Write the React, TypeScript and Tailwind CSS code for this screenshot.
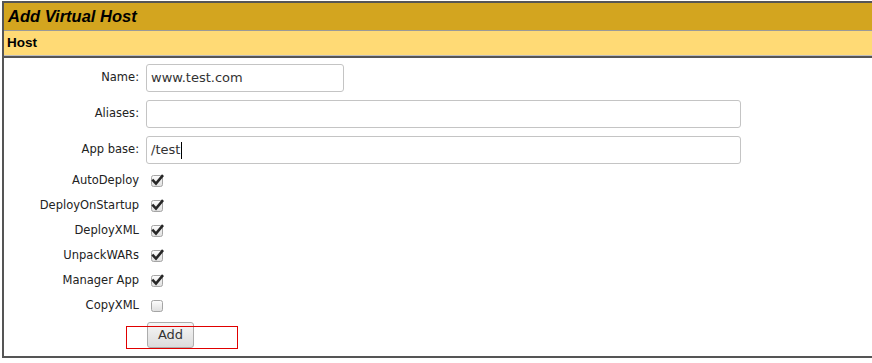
import React from "react";

const font = { fontFamily: '"DejaVu Sans", Verdana, sans-serif' };

function Check({ checked }: { checked: boolean }) {
  return (
    <svg width="14" height="14" viewBox="0 0 14 14" className="block">
      <defs>
        <linearGradient id="cbg" x1="0" y1="0" x2="0" y2="1">
          <stop offset="0" stopColor="#fdfdfd" />
          <stop offset="1" stopColor="#dedede" />
        </linearGradient>
      </defs>
      <rect x="1.5" y="1.5" width="11" height="11" rx="2" fill="url(#cbg)" stroke="#a5a5a5" />
      {checked && (
        <path d="M3.2 6.6 L6 9.6 L12.2 2.2" fill="none" stroke="#262626" strokeWidth="2.6" strokeLinecap="square" strokeLinejoin="miter" />
      )}
    </svg>
  );
}

function Field({ label, value, wide, caret }: { label: string; value: string; wide?: boolean; caret?: boolean }) {
  return (
    <div className="flex h-[36px] items-center">
      <div className="w-[135px] text-right text-[11.5px] text-[#222]">{label}:</div>
      <div
        className={`ml-[7px] flex h-[28px] items-center rounded-[3px] border border-[#c4c4c4] bg-white pl-[4px] text-[13px] text-[#333] ${wide ? "w-[595px]" : "w-[198px]"}`}
      >
        {value}
        {caret && <span className="ml-[1px] inline-block h-[17px] w-px bg-black" />}
      </div>
    </div>
  );
}

function CheckRow({ label, checked }: { label: string; checked: boolean }) {
  return (
    <div className="flex h-[25px] items-center">
      <div className="w-[135px] text-right text-[11.5px] text-[#222]">{label}</div>
      <div className="ml-[11px]">
        <Check checked={checked} />
      </div>
    </div>
  );
}

export default function App() {
  return (
    <div className="h-[363px] w-[872px] overflow-hidden bg-white pt-px" style={font}>
      <div className="ml-[2px] border-l-2 border-t-2 border-b-2 border-[#555]">
        <div
          className="flex h-[28px] items-center border-b border-[#9a9a9a] bg-[#d3a51f] pl-[4px] text-[16.5px] font-bold italic text-black"
          style={{ fontFamily: '"Liberation Sans", Arial, sans-serif' }}
        >
          Add Virtual Host
        </div>
        <div
          className="flex h-[25px] items-center border-b border-[#bdbdbd] bg-[#ffda75] pl-[3px] text-[13.5px] font-bold text-black"
          style={{ fontFamily: '"Liberation Sans", Arial, sans-serif' }}
        >
          Host
        </div>
        <div className="border-t-2 border-[#555] pt-[2px] pb-[4px]">
          <Field label="Name" value="www.test.com" />
          <Field label="Aliases" value="" wide />
          <Field label="App base" value="/test" wide caret />
          <CheckRow label="AutoDeploy" checked />
          <CheckRow label="DeployOnStartup" checked />
          <CheckRow label="DeployXML" checked />
          <CheckRow label="UnpackWARs" checked />
          <CheckRow label="Manager App" checked />
          <CheckRow label="CopyXML" checked={false} />
          <div className="flex h-[34px] items-center">
            <div className="relative ml-[143px]">
              <button className="h-[26px] w-[47px] rounded-[3px] border border-[#acacac] bg-gradient-to-b from-[#f6f6f6] to-[#dcdcdc] text-[13px] text-[#333]">
                Add
              </button>
              <div className="pointer-events-none absolute left-[-21px] top-[4px] h-[23px] w-[112px] border border-[#e00000]" />
            </div>
          </div>
        </div>
      </div>
    </div>
  );
}
